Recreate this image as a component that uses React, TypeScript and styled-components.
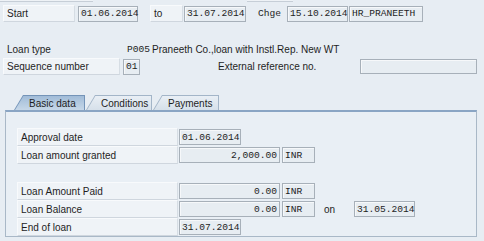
import React from 'react';
import styled, { createGlobalStyle } from 'styled-components';

const GlobalStyle = createGlobalStyle`
    html, body {
        margin: 0;
        padding: 0;
    }
    body {
        background: #e7edf3;
        font-family: "Liberation Sans", Arial, sans-serif;
        font-size: 10px;
        color: #1e1e1e;
    }
`;

const Screen = styled.div`
    width: 484px;
    height: 241px;
    overflow: hidden;
`;

const TopStrip = styled.div`
    display: flex;
    height: 2px;
`;

const Stub = styled.div<{ $w: number; $ml?: number }>`
    box-sizing: border-box;
    width: ${(p) => p.$w}px;
    margin-left: ${(p) => p.$ml ?? 0}px;
    border-bottom: 1px solid #c6ced7;
    background: #eef2f6;
`;

const Header = styled.div`
    display: flex;
    flex-direction: column;
    padding-top: 3px;
`;

const Row = styled.div<{ $mt?: number; $h?: number }>`
    display: flex;
    align-items: center;
    height: ${(p) => p.$h ?? 17}px;
    margin-top: ${(p) => p.$mt ?? 0}px;
`;

const Label = styled.div<{ $w: number; $ml?: number; $boxed?: boolean; $mono?: boolean }>`
    box-sizing: border-box;
    width: ${(p) => p.$w}px;
    margin-left: ${(p) => p.$ml ?? 0}px;
    height: 100%;
    display: flex;
    align-items: center;
    padding-left: 3px;
    white-space: nowrap;
    background: ${(p) => (p.$boxed ? '#eff3f7' : 'transparent')};
    border-top: 1px solid ${(p) => (p.$boxed ? '#f8fafc' : 'transparent')};
    border-left: 1px solid ${(p) => (p.$boxed ? '#f8fafc' : 'transparent')};
    border-bottom: 1px solid ${(p) => (p.$boxed ? '#cfd6de' : 'transparent')};
    border-right: 1px solid ${(p) => (p.$boxed ? '#d6dde4' : 'transparent')};
    font-family: ${(p) =>
        p.$mono ? '"Liberation Mono", "Courier New", monospace' : 'inherit'};
    font-size: ${(p) => (p.$mono ? '9.6px' : 'inherit')};
`;

const Mono = styled.span<{ $ml?: number }>`
    margin-left: ${(p) => p.$ml ?? 0}px;
    font-family: "Liberation Mono", "Courier New", monospace;
    font-size: 9.6px;
`;

const Text = styled.span<{ $ml?: number }>`
    margin-left: ${(p) => p.$ml ?? 0}px;
    white-space: nowrap;
`;

const Field = styled.div<{ $w: number; $ml?: number; $right?: boolean; $h?: number }>`
    box-sizing: border-box;
    width: ${(p) => p.$w}px;
    height: ${(p) => p.$h ?? 16}px;
    margin-left: ${(p) => p.$ml ?? 0}px;
    padding: 0 2px;
    display: flex;
    align-items: center;
    justify-content: ${(p) => (p.$right ? 'flex-end' : 'flex-start')};
    border: 1px solid #a7b0b9;
    background: #e7edf2;
    box-shadow: inset 1px 1px 0 #f6f8fa;
    font-family: "Liberation Mono", "Courier New", monospace;
    font-size: 9.6px;
    white-space: nowrap;
`;

const TabStrip = styled.div`
    display: flex;
    margin-top: 20px;
    padding-left: 14px;
    height: 15px;
`;

const Tab = styled.div<{ $w: number; $ml?: number; $active?: boolean }>`
    box-sizing: border-box;
    width: ${(p) => p.$w}px;
    height: 15px;
    margin-left: ${(p) => p.$ml ?? 0}px;
    padding: 1px 1px 0 1px;
    background: ${(p) => (p.$active ? '#7494b8' : '#a3b5c8')};
    clip-path: polygon(9px 0, 100% 0, 100% 100%, 0 100%);
`;

const TabFace = styled.div<{ $active?: boolean }>`
    height: 100%;
    display: flex;
    align-items: center;
    padding-left: 14px;
    background: ${(p) =>
        p.$active
            ? 'linear-gradient(#a1bcd8, #c6d7e8)'
            : 'linear-gradient(#e9eff5, #d6e0ea)'};
    clip-path: polygon(8.4px 0, 100% 0, 100% 100%, 0 100%);
    white-space: nowrap;
`;

const Panel = styled.div`
    box-sizing: border-box;
    width: 472px;
    height: 127px;
    margin-left: 5px;
    padding-top: 16px;
    border: 1px solid #a9b8c7;
    border-top: 2px solid #8aa5c4;
    background: #e9eff5;
    display: flex;
    flex-direction: column;
`;

const PanelRow = styled(Row)`
    height: 18px;
`;

const tabs = [
    { title: 'Basic data', w: 71, ml: 0, active: true },
    { title: 'Conditions', w: 66, ml: 1 },
    { title: 'Payments', w: 66, ml: 1 },
];

const App: React.FC = () => (
    <Screen>
        <GlobalStyle />
        <TopStrip>
            <Stub $w={93} />
            <Stub $w={46} $ml={154} />
        </TopStrip>
        <Header>
            <Row>
                <Label $w={72} $ml={3} $boxed>
                    Start
                </Label>
                <Field $w={60} $ml={3}>
                    01.06.2014
                </Field>
                <Label $w={33} $ml={12} $boxed>
                    to
                </Label>
                <Field $w={62} $ml={1}>
                    31.07.2014
                </Field>
                <Label $w={32} $ml={8} $mono>
                    Chge
                </Label>
                <Field $w={61} $ml={1}>
                    15.10.2014
                </Field>
                <Field $w={74} $ml={1}>
                    HR_PRANEETH
                </Field>
            </Row>
            <Row $mt={19}>
                <Label $w={124} $ml={3}>
                    Loan type
                </Label>
                <Mono>P005</Mono>
                <Text $ml={2}>Praneeth Co.,loan with Instl.Rep. New WT</Text>
            </Row>
            <Row>
                <Label $w={117} $ml={3} $boxed>
                    Sequence number
                </Label>
                <Field $w={17} $ml={3}>
                    01
                </Field>
                <Label $w={145} $ml={74}>
                    External reference no.
                </Label>
                <Field $w={117} $ml={1} $h={15} />
            </Row>
        </Header>

        <TabStrip>
            {tabs.map((t) => (
                <Tab key={t.title} $w={t.w} $ml={t.ml} $active={t.active}>
                    <TabFace $active={t.active}>{t.title}</TabFace>
                </Tab>
            ))}
        </TabStrip>

        <Panel>
            <PanelRow>
                <Label $w={161} $ml={11} $boxed>
                    Approval date
                </Label>
                <Field $w={62} $ml={1}>
                    01.06.2014
                </Field>
            </PanelRow>
            <PanelRow>
                <Label $w={161} $ml={11} $boxed>
                    Loan amount granted
                </Label>
                <Field $w={101} $ml={1} $right>
                    2,000.00
                </Field>
                <Field $w={33} $ml={2}>
                    INR
                </Field>
            </PanelRow>
            <PanelRow />
            <PanelRow>
                <Label $w={161} $ml={11} $boxed>
                    Loan Amount Paid
                </Label>
                <Field $w={101} $ml={1} $right>
                    0.00
                </Field>
                <Field $w={33} $ml={2}>
                    INR
                </Field>
            </PanelRow>
            <PanelRow>
                <Label $w={161} $ml={11} $boxed>
                    Loan Balance
                </Label>
                <Field $w={101} $ml={1} $right>
                    0.00
                </Field>
                <Field $w={33} $ml={2}>
                    INR
                </Field>
                <Label $w={33} $ml={5}>
                    on
                </Label>
                <Field $w={61} $ml={1}>
                    31.05.2014
                </Field>
            </PanelRow>
            <PanelRow>
                <Label $w={161} $ml={11} $boxed>
                    End of loan
                </Label>
                <Field $w={62} $ml={1}>
                    31.07.2014
                </Field>
            </PanelRow>
        </Panel>
    </Screen>
);

export default App;
